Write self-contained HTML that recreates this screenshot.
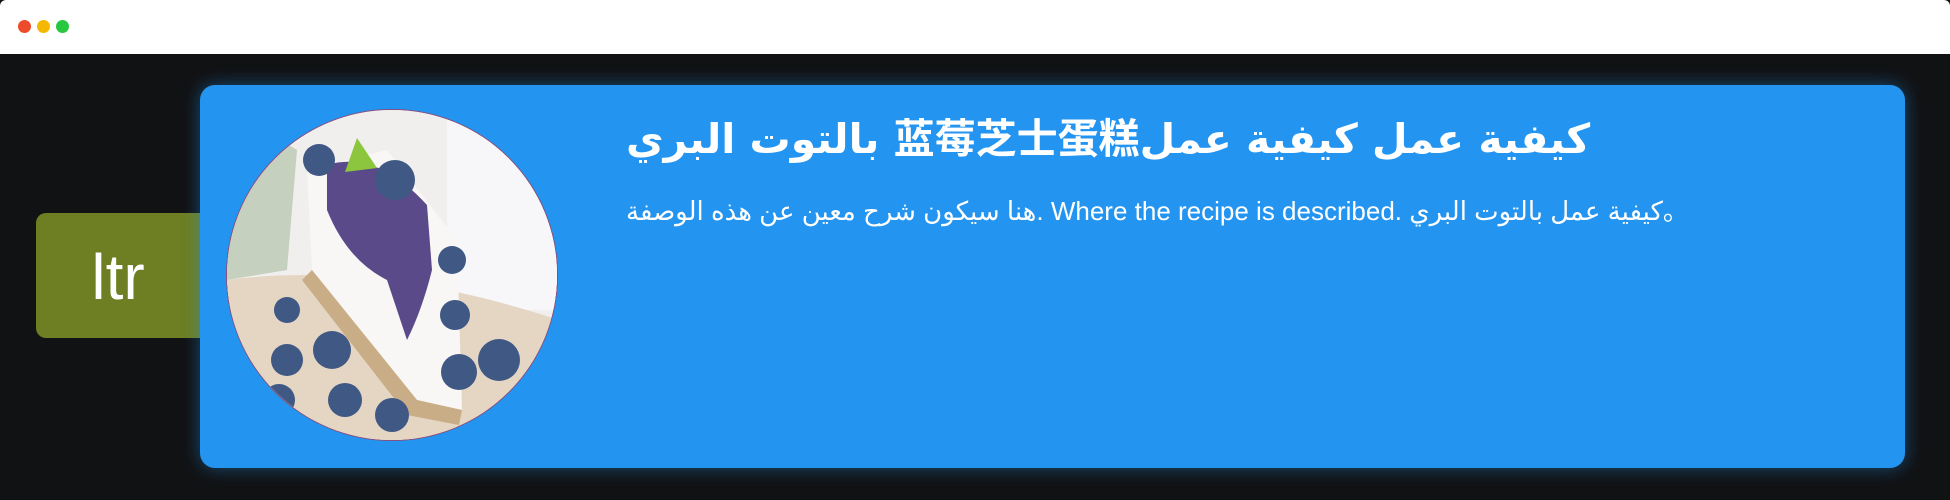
<!DOCTYPE html>
<html><head><meta charset="utf-8"><style>
html,body{margin:0;padding:0;width:1950px;height:500px;overflow:hidden;background:#111214;font-family:"Liberation Sans","Noto Sans CJK SC",sans-serif}
.bar{position:absolute;left:0;top:0;width:1950px;height:54px;background:#fff;border-radius:6px 6px 0 0}
.dot{position:absolute;top:20px;width:13px;height:13px;border-radius:50%}
.tag{position:absolute;left:36px;top:213px;width:190px;height:125px;background:#6e7e22;border-radius:10px}
.tag span{position:absolute;left:0;width:164px;top:27px;text-align:center;color:#fff;font-family:"Liberation Sans",sans-serif;font-size:64px}
.card{position:absolute;left:200px;top:85px;width:1705px;height:383px;background:#2394f0;border-radius:15px;box-shadow:0 0 18px rgba(35,148,240,.45)}
.pic{position:absolute;left:26px;top:24px;width:332px;height:332px;border-radius:50%;overflow:hidden;border:1.5px solid #8a4d7a;box-sizing:border-box;background:#f2eee9}
.t{position:absolute;left:426px;top:20px;width:1170px;direction:rtl;text-align:left;color:#fff;font-weight:bold;font-size:41px;font-family:"DejaVu Sans","Noto Sans CJK SC",sans-serif;white-space:nowrap}
.s{position:absolute;left:426px;top:106px;color:#fff;font-size:26px;font-family:"Liberation Sans","DejaVu Sans",sans-serif;white-space:nowrap}
</style></head><body>
<div class="bar"></div>
<div class="dot" style="left:18px;background:#ee4b2b"></div>
<div class="dot" style="left:37px;background:#f5b800"></div>
<div class="dot" style="left:56px;background:#27c840"></div>
<div class="tag"><span>ltr</span></div>
<div class="card">
<div class="pic"><svg width="332" height="332" viewBox="0 0 332 332">
<rect width="332" height="332" fill="#f1efee"/>
<rect x="220" y="0" width="112" height="200" fill="#f7f7fa"/>
<path d="M0 40 Q40 20 70 40 L60 160 L0 170Z" fill="#9bb28e" opacity=".5"/>
<path d="M0 170 Q150 150 332 210 L332 332 L0 332Z" fill="#e4d6c3"/>
<path d="M80 60 L160 40 L230 130 L235 300 L190 290 L85 160Z" fill="#f8f7f5"/>
<path d="M85 160 L190 290 L235 300 L232 315 L180 305 L75 170Z" fill="#c9ad86"/>
<path d="M100 55 Q150 40 200 95 L205 160 Q195 200 180 230 L160 170 Q120 150 100 100Z" fill="#5a4a8a"/>
<path d="M118 62 L130 28 L150 58Z" fill="#8cc63f"/>
<g fill="#3f5884">
<circle cx="92" cy="50" r="16"/><circle cx="168" cy="70" r="20"/><circle cx="225" cy="150" r="14"/>
<circle cx="60" cy="200" r="13"/><circle cx="60" cy="250" r="16"/><circle cx="52" cy="290" r="16"/>
<circle cx="105" cy="240" r="19"/><circle cx="118" cy="290" r="17"/><circle cx="165" cy="305" r="17"/>
<circle cx="228" cy="205" r="15"/><circle cx="232" cy="262" r="18"/><circle cx="272" cy="250" r="21"/>
</g>
</svg></div>
<div class="t">كيفية عمل كيفية عمل蓝莓芝士蛋糕 بالتوت البري</div>
<div class="s">هنا سيكون شرح معين عن هذه الوصفة. Where the recipe is described. كيفية عمل بالتوت البري。</div>
</div>
</body></html>
